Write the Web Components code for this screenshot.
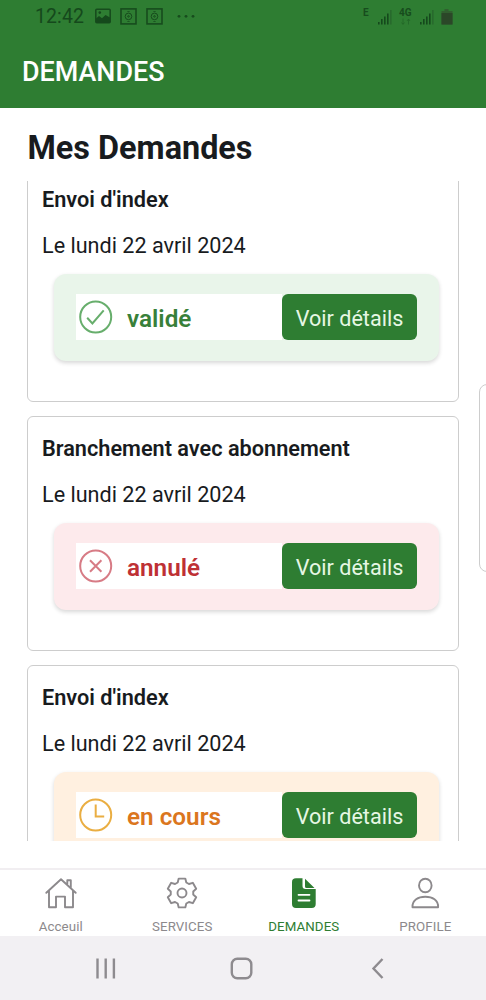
<!DOCTYPE html>
<html lang="fr">
<head>
<meta charset="utf-8">
<title>Mes Demandes</title>
<style>
html,body{margin:0;padding:0;height:1000px;overflow:hidden;background:#fff}
body{font-family:Roboto,"Liberation Sans",sans-serif;color:#181b1e}
</style>
</head>
<body>
<demandes-app></demandes-app>
<script>
const define = (name, html, setup) => customElements.define(name, class extends HTMLElement {
  constructor() {
    super();
    this.attachShadow({mode: 'open'});
  }
  connectedCallback() {
    this.shadowRoot.innerHTML = html;
    if (setup) setup(this, this.shadowRoot);
  }
});

const statusIcons = {
  'validé': '<path d="M8.500 17.800l5.200 5.600L25 10.300"/>',
  'annulé': '<path d="M11.300 11.300l11.400 11.400M22.700 11.300L11.300 22.700"/>',
  'en cours': '<path d="M17 6.500V18.500H25.500"/>'
};

define('status-bar', `<style>
:host{display:flex;height:34px;box-sizing:border-box;padding:8px 33px 0 35px;align-items:flex-start;color:#15491c}
.time{font-size:19.500px;line-height:18px;width:59.500px;letter-spacing:.1px}
svg{display:block;flex:none}
.sp{flex:1}
.net{font-size:10px;font-weight:700;line-height:10px;color:#174c1d}
</style>
<span class="time">12:42</span>
<svg width="16" height="16" viewBox="0 0 16 16"><rect x=".8" y="1.300" width="14.400" height="13.400" rx="1" fill="none" stroke="#174c1d" stroke-width="1.600"/><path d="M1 14V10.500L4 8l3 2.300L10.500 7 15 9.500V15H1z" fill="#15491c"/><circle cx="4.800" cy="4.600" r="1.300" fill="#15491c"/></svg>
<svg style="margin-left:9.500px" width="17" height="17" viewBox="0 0 17 17"><g fill="none" stroke="#174c1d"><rect x="1" y=".9" width="15" height="15" stroke-width="1.600"/><circle cx="8.500" cy="8.400" r="3.300"/><circle cx="8.500" cy="8.400" r=".8"/><path d="M7.500 4l1-1 1 1M7.500 13l1 1 1-1"/></g></svg>
<svg style="margin-left:9px" width="17" height="17" viewBox="0 0 17 17"><g fill="none" stroke="#174c1d"><rect x="1" y=".9" width="15" height="15" stroke-width="1.600"/><circle cx="8.500" cy="8.400" r="3.300"/><circle cx="8.500" cy="8.400" r=".8"/><path d="M7.500 4l1-1 1 1M7.500 13l1 1 1-1"/></g></svg>
<svg style="margin-left:14px" width="18" height="17"><g fill="#174c1d"><circle cx="2" cy="8.300" r="1.400"/><circle cx="9" cy="8.300" r="1.400"/><circle cx="16" cy="8.300" r="1.400"/></g></svg>
<span class="sp"></span>
<span class="net" style="width:14px">E</span>
<svg width="16" height="17"><path d="M1 14h1.600v2.500H1zM4 11h1.600v5.500H4zM7 8.500h1.600v8H7zM10 5.500h1.600v11H10z" fill="#15491c"/><path d="M13 2h1.600v14.500H13z" fill="#286a2d"/></svg>
<span class="net" style="width:20px;margin-left:6px">4G<svg width="13" height="8" fill="none" stroke="#1f6325"><path d="M4 .5v5.500M2.500 4.500l1.500 2 1.500-2M9.500 6.500V1.500M8 3l1.500-2 1.500 2" opacity=".7"/></svg></span>
<svg width="16" height="17"><path d="M1 14h1.600v2.500H1zM4 11h1.600v5.500H4zM7 8.500h1.600v8H7zM10 5.500h1.600v11H10z" fill="#15491c"/><path d="M13 2h1.600v14.500H13z" fill="#286a2d"/></svg>
<svg style="margin-left:6px" width="12" height="17"><path d="M3.500 1h4v2h4v13.500H.5V3h3z" fill="#315f2f"/><path d="M.5 5h11v11.500H.5z" fill="#2b4728"/></svg>
`);

define('app-header', `<style>
:host{display:block;height:108px;background:#2e7d32}
h1{margin:0;padding:20px 0 0 22px;font-size:26.900px;line-height:36px;font-weight:500;color:#fff}
</style><status-bar></status-bar><h1><slot></slot></h1>`);

define('state-icon', `<style>:host{display:block;width:34px;height:34px}svg{display:block}</style>
<svg width="34" height="34" viewBox="0 0 34 34" fill="none" stroke="currentColor" stroke-width="2"><circle cx="16.700" cy="17" r="15.500"/><g transform="translate(-.3 0)"></g></svg>`,
(el, root) => { root.querySelector('g').innerHTML = statusIcons[el.getAttribute('state')]; });

define('detail-button', `<style>
:host{display:block}
button{display:block;width:135px;height:46px;border:0;border-radius:6px;background:#2e7d32;color:#e6f7e4;font:400 21.600px/26px Roboto,"Liberation Sans",sans-serif;padding:3px 0 0}
</style><button><slot></slot></button>`);

define('request-card', `<style>
:host{display:block;flex:none;box-sizing:border-box;height:235px;border:1.500px solid #cdcdcd;border-radius:6px;padding:19px 13px 0 14px}
h3{margin:0;font-size:21.700px;line-height:26px;font-weight:600}
p{margin:20px 0 0;font-size:21.600px;line-height:26px}
.alert{display:flex;box-sizing:border-box;margin:15px 6px 0 12px;height:87px;padding:20px 22px 0 22px;border-radius:12px;box-shadow:0 2px 4px rgba(0,0,0,.16)}
.state{display:flex;align-items:center;width:206px;height:46px;box-sizing:border-box;background:#fff;padding-left:3px}
.label{margin-left:14px;font-size:24.300px;line-height:30px;font-weight:600;padding-top:3px}
</style><h3></h3><p></p><div class="alert"><div class="state"><span class="label"></span></div><detail-button>Voir détails</detail-button></div>`,
(el, root) => {
  const state = el.getAttribute('state');
  const [bg, iconColor, text] = {
    'validé': ['#e9f5ea', '#67ae6c', '#388039'],
    'annulé': ['#fdeaec', '#d77b85', '#be3034'],
    'en cours': ['#fff0e0', '#eaae42', '#db761e']
  }[state];
  root.querySelector('h3').textContent = el.getAttribute('subject');
  root.querySelector('p').textContent = el.getAttribute('date');
  root.querySelector('.alert').style.background = bg;
  const icon = document.createElement('state-icon');
  icon.setAttribute('state', state);
  icon.style.color = iconColor;
  root.querySelector('.state').prepend(icon);
  const label = root.querySelector('.label');
  label.textContent = state;
  label.style.color = text;
});

define('request-list', `<style>
:host{display:flex;flex-direction:column;height:660px;overflow:hidden;margin-left:27px;width:432px}
.track{display:flex;flex-direction:column;gap:14px;margin-top:-14px}
</style><div class="track"><slot></slot></div>`);

define('nav-item', `<style>
:host{display:flex;flex:1;flex-direction:column;align-items:center;color:#8c898c;font-size:13.300px;line-height:16px;letter-spacing:.1px}
:host([active]){color:#2e7d32}
svg{display:block;margin:7px 0 10px}
</style><svg width="34" height="32" viewBox="-17 -16 34 32" fill="none" stroke="currentColor" stroke-width="1.900" stroke-linejoin="round" stroke-linecap="round"></svg><slot></slot>`,
(el, root) => {
  const icons = {
    home: '<path d="M-14.700-.2L0-13.700 14.700-.2M-12-2.200V14.300H-5V3.600H4V14.300H12V-2.200M6.300-7.700V-12.700H9.800V-4.700"/>',
    gear: '<path d="M-3.300-14.400H3.300L4.300-10.500 6.940-8.970 10.800-10.200 14.200-4.220 11.240-1.530V1.530L14.200 4.220 10.800 10.200 6.940 8.970 4.300 10.500 3.300 14.400H-3.300L-4.300 10.500-6.940 8.970-10.800 10.200-14.200 4.220-11.240 1.530V-1.530L-14.200-4.220-10.800-10.200-6.940-8.970-4.300-10.500z"/><circle r="4.500"/>',
    file: '<path fill="currentColor" stroke="none" d="M-8-14.700H-1.500V-7Q-1.500-4 1.500-4H11.700V11Q11.700 15 7.700 15H-8Q-12 15-12 11V-11Q-12-14.700-8-14.700zM1-14.200L10.500-5H2.500Q1-5 1-6.500z"/><path d="M-5.500 1.800H5.500M-5.500 7.500H5.500" stroke="#fff" stroke-width="1.800"/>',
    user: '<ellipse cx=".3" cy="-7.500" rx="6.300" ry="6.800"/><path d="M-12.500 14.300C-12.900 6.800-6.700 3.800.3 3.800S13.500 6.800 13.100 14.300z"/>'
  };
  root.querySelector('svg').innerHTML = icons[el.getAttribute('icon')];
});

define('tab-bar', `<style>:host{display:flex;box-sizing:border-box;height:68px;border-top:2px solid #f1eef1;margin-top:27px}</style><slot></slot>`);

define('system-nav', `<style>
:host{display:block;height:64px;background:#f2f0f3}svg{display:block}</style>
<svg width="486" height="64" fill="none" stroke="#8e8b8f" stroke-width="2.400"><path d="M97.500 22.500v20M105.700 22.500v20M113.900 22.500v20M382.500 23L373.500 32.500 382.500 42"/><rect x="231.800" y="22.700" width="19.500" height="19.500" rx="5.500"/></svg>`);

define('demandes-app', `<style>
:host{display:block;position:relative;width:486px;height:1000px;overflow:hidden;background:#fff}
h2{margin:0;height:73px;box-sizing:border-box;padding:20px 0 0 27.500px;font-size:32.400px;line-height:40px;font-weight:700}
.peek{position:absolute;left:479px;top:384px;width:30px;height:188px;box-sizing:border-box;border:1.500px solid #cdcdcd;border-radius:8px}
</style>
<app-header>DEMANDES</app-header>
<h2>Mes Demandes</h2>
<request-list>
<request-card subject="Envoi d'index" date="Le lundi 22 avril 2024" state="validé"></request-card>
<request-card subject="Branchement avec abonnement" date="Le lundi 22 avril 2024" state="annulé"></request-card>
<request-card subject="Envoi d'index" date="Le lundi 22 avril 2024" state="en cours"></request-card>
</request-list>
<div class="peek"></div>
<tab-bar><nav-item icon="home">Acceuil</nav-item><nav-item icon="gear">SERVICES</nav-item><nav-item icon="file" active>DEMANDES</nav-item><nav-item icon="user">PROFILE</nav-item></tab-bar>
<system-nav></system-nav>`);
</script>
</body>
</html>
